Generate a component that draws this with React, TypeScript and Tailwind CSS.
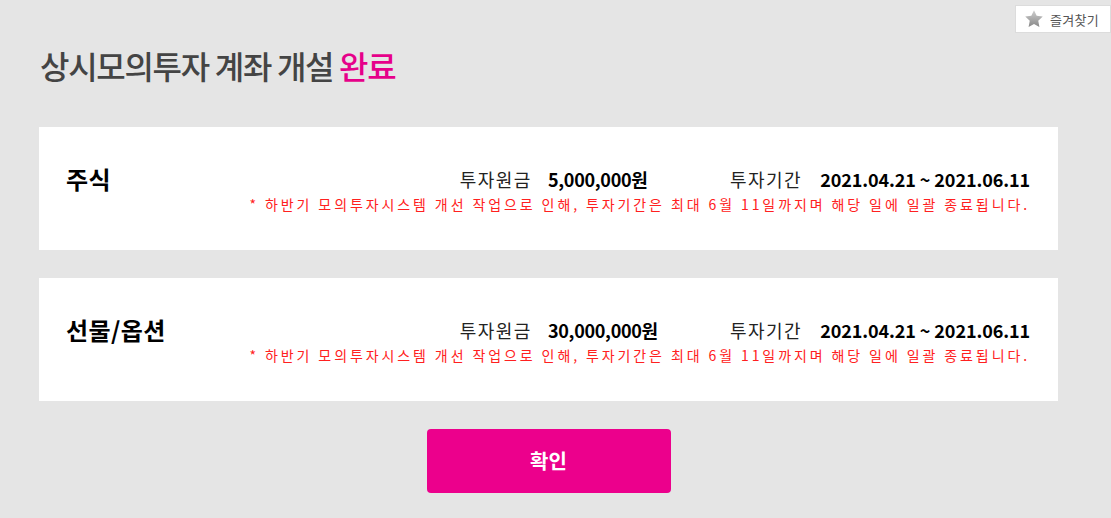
import React from "react";

const KR = { fontFamily: '"Noto Sans CJK KR", "Noto Sans", sans-serif' };

function Card({ title, amount }: { title: string; amount: string }) {
  return (
    <div className="flex h-[123px] bg-white pl-[27px] pr-[28px] pt-[40px]">
      <div className="w-[180px] text-[24px] font-bold leading-[24px] tracking-[0.4px] text-black">{title}</div>
      <div className="flex flex-1 flex-col items-end">
        <div className="flex h-[24px] items-center text-[18px] leading-[24px] text-black">
          <span className="tracking-[1.5px] text-[#222]">투자원금</span>
          <span className="ml-[16px] w-[182px] font-bold tracking-[-0.3px]">{amount}</span>
          <span className="tracking-[1.5px] text-[#222]">투자기간</span>
          <span className="ml-[18px] font-bold tracking-[-0.1px]">2021.04.21&nbsp;~&nbsp;2021.06.11</span>
        </div>
        <div className="mt-[3px] text-[14px] leading-[20px] tracking-[2.9px] text-[#ff2020]">
          * 하반기 모의투자시스템 개선 작업으로 인해, 투자기간은 최대 6월 11일까지며 해당 일에 일괄 종료됩니다.
        </div>
      </div>
    </div>
  );
}

export default function App() {
  return (
    <div className="relative min-h-[518px] w-[1111px] bg-[#e5e5e5]" style={KR}>
      <div className="absolute right-0 top-[5px] flex h-[28px] w-[96px] items-center gap-[6px] border border-[#dcdcdc] bg-white pl-[8px]">
        <svg width="20" height="20" viewBox="0 0 24 24">
          <defs>
            <linearGradient id="sg" x1="0" y1="0" x2="0" y2="1">
              <stop offset="0" stopColor="#cfcfcf" />
              <stop offset="1" stopColor="#888" />
            </linearGradient>
          </defs>
          <path
            d="M12 1.5l3.2 6.7 7.3.9-5.4 5.1 1.4 7.3L12 18l-6.5 3.5 1.4-7.3-5.4-5.1 7.3-.9z"
            fill="url(#sg)"
          />
        </svg>
        <span className="text-[13px] leading-none tracking-[0.3px] text-[#555]">즐겨찾기</span>
      </div>
      <div className="pl-[39px] pr-[53px] pt-[44px]">
        <h1 className="pl-[1px] text-[32px] font-medium leading-[42px] tracking-[-1.3px] text-[#444]">
          상시모의투자 계좌 개설 <span className="text-[#e6008a]">완료</span>
        </h1>
        <div className="mt-[41px] flex flex-col gap-[28px]">
          <Card title="주식" amount="5,000,000원" />
          <Card title="선물/옵션" amount="30,000,000원" />
        </div>
        <div className="mt-[28px] flex justify-center">
          <button className="flex h-[64px] w-[244px] items-center justify-center rounded-[4px] bg-[#ec008c] text-[20px] font-bold text-white">
            확인
          </button>
        </div>
      </div>
    </div>
  );
}
